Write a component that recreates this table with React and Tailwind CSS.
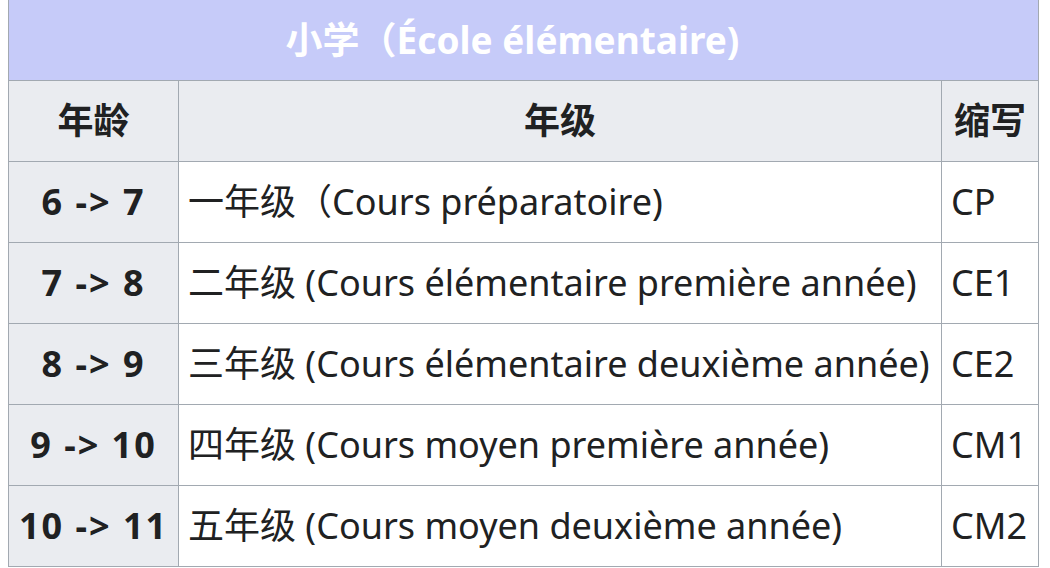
import React from 'react';

// 法国小学年级对照表
const rows = [
  { age: '6 -> 7', grade: '一年级（Cours préparatoire)', abbr: 'CP' },
  { age: '7 -> 8', grade: '二年级 (Cours élémentaire première année)', abbr: 'CE1' },
  { age: '8 -> 9', grade: '三年级 (Cours élémentaire deuxième année)', abbr: 'CE2' },
  { age: '9 -> 10', grade: '四年级 (Cours moyen première année)', abbr: 'CM1' },
  { age: '10 -> 11', grade: '五年级 (Cours moyen deuxième année)', abbr: 'CM2' },
];

const font = { fontFamily: '"Noto Sans", "Noto Sans CJK SC", sans-serif' };

export default function App() {
  return (
    <div className="w-[1050px] h-[568px] bg-white overflow-hidden pl-2 text-[#202122]" style={font}>
      <table className="border-collapse table-fixed w-[1030px] text-[36px] leading-none">
        <colgroup>
          <col className="w-[170px]" />
          <col className="w-[763px]" />
          <col className="w-[97px]" />
        </colgroup>
        <thead>
          <tr className="h-[80px]">
            <th colSpan={3} className="bg-[#c6cbf9] text-white font-bold text-center text-[37px] pr-[22px] border-x border-b border-[#a2a9b1]">
              小学（École élémentaire)
            </th>
          </tr>
          <tr className="h-[81px]">
            <th className="bg-[#eaecf0] border border-[#a2a9b1] font-bold text-center">年龄</th>
            <th className="bg-[#eaecf0] border border-[#a2a9b1] font-bold text-center">年级</th>
            <th className="bg-[#eaecf0] border border-[#a2a9b1] font-bold text-center">缩写</th>
          </tr>
        </thead>
        <tbody>
          {rows.map((r) => (
            <tr key={r.abbr} className="h-[81px]">
              <th className="bg-[#eaecf0] border border-[#a2a9b1] font-bold text-center whitespace-nowrap tracking-[2px]">{r.age}</th>
              <td className="border border-[#a2a9b1] px-[9px] whitespace-nowrap">{r.grade}</td>
              <td className="border border-[#a2a9b1] px-[9px] whitespace-nowrap">{r.abbr}</td>
            </tr>
          ))}
        </tbody>
      </table>
    </div>
  );
}
